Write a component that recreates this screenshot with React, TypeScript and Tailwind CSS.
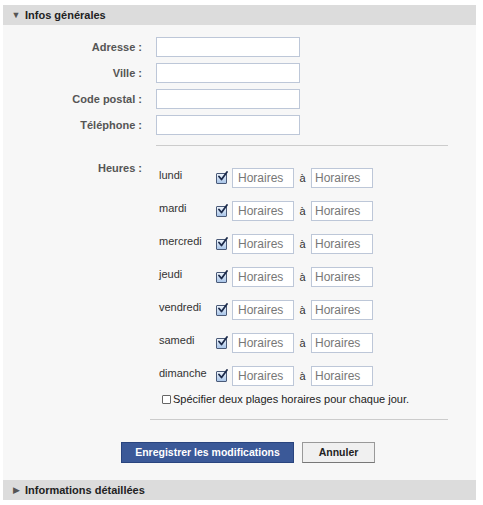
import React from 'react';

const days = ['lundi', 'mardi', 'mercredi', 'jeudi', 'vendredi', 'samedi', 'dimanche'];

const CheckIcon: React.FC = () => (
  <span className="inline-flex h-[11px] w-[11px] items-center justify-center border border-[#4a5a78] bg-gradient-to-b from-[#eef4fb] to-[#a9c5e8] rounded-[1px]">
    <svg width="11" height="11" viewBox="0 0 11 11" className="-mt-[3px] -mr-[2px]">
      <path d="M2 5.5 L4.5 8.5 L10 1" stroke="#1c2a4a" strokeWidth="1.8" fill="none" strokeLinecap="round" strokeLinejoin="round" />
    </svg>
  </span>
);

const Field: React.FC<{ label: string }> = ({ label }) => (
  <>
    <div className="text-right font-bold text-[11px] text-[#555] leading-[20px]">{label}</div>
    <input type="text" className="h-[20px] w-[144px] border border-[#bdc7d8] bg-white outline-none" />
  </>
);

const SectionHeader: React.FC<{ title: string; open: boolean }> = ({ title, open }) => (
  <div className="flex items-center h-[20px] bg-[#dcdcdc] pl-[8px] gap-[4px]">
    <span className="text-[9px] text-[#555] w-[10px] text-center leading-none">{open ? '▼' : '▶'}</span>
    <span className="font-bold text-[11px] text-[#222]">{title}</span>
  </div>
);

export default function App() {
  return (
    <div className="bg-white w-[483px] h-[505px] pt-[5px] pl-[3px]" style={{ fontFamily: '"Liberation Sans", Arial, sans-serif' }}>
      <div className="w-[473px]">
        <SectionHeader title="Infos générales" open />
        <div className="bg-[#f7f7f7] pt-[12px] pb-[17px]">
          <div className="grid grid-cols-[139px_144px] gap-x-[14px] gap-y-[6px] items-center">
            <Field label="Adresse :" />
            <Field label="Ville :" />
            <Field label="Code postal :" />
            <Field label="Téléphone :" />
          </div>
          <div className="ml-[153px] mr-[28px] mt-[10px] border-t border-[#cccccc]" />

          <div className="flex mt-[17px]">
            <div className="w-[139px] text-right font-bold text-[11px] text-[#555] -mt-[3px]">Heures :</div>
            <div className="ml-[17px] pt-[5px]">
              <div className="flex flex-col gap-[13px]">
                {days.map((d) => (
                  <div key={d} className="flex items-center h-[20px]">
                    <span className="w-[57px] text-[11px] text-[#333] -mt-[5px]">{d}</span>
                    <CheckIcon />
                    <input type="text" placeholder="Horaires" className="ml-[5px] h-[20px] w-[62px] border border-[#bdc7d8] bg-white px-[5px] text-[12px] placeholder-[#777] outline-none" />
                    <span className="w-[17px] text-center text-[11px] text-[#333]">à</span>
                    <input type="text" placeholder="Horaires" className="h-[20px] w-[62px] border border-[#bdc7d8] bg-white px-[3px] text-[12px] placeholder-[#777] outline-none" />
                  </div>
                ))}
              </div>
              <div className="flex items-center mt-[7px] ml-[3px] h-[12px]">
                <span className="h-[9px] w-[9px] border border-[#666] bg-white rounded-[1px]" />
                <span className="ml-[2px] text-[11px] text-[#222]">Spécifier deux plages horaires pour chaque jour.</span>
              </div>
            </div>
          </div>
          <div className="ml-[147px] mr-[28px] mt-[14px] border-t border-[#cccccc]" />

          <div className="flex mt-[22px] ml-[118px] gap-[8px]">
            <button className="h-[21px] w-[173px] bg-[#3b5998] border border-[#29447e] text-white font-bold text-[10.5px]">Enregistrer les modifications</button>
            <button className="h-[21px] w-[73px] bg-[#f0f0f0] border border-[#999] border-b-[#777] text-[#222] font-bold text-[10.5px]">Annuler</button>
          </div>
        </div>
        <SectionHeader title="Informations détaillées" open={false} />
      </div>
    </div>
  );
}
